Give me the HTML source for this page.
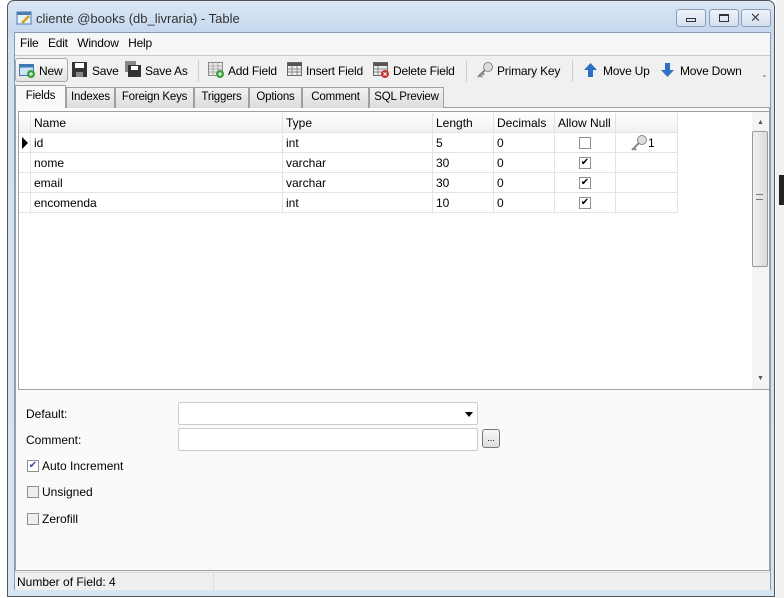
<!DOCTYPE html>
<html><head><style>
*{box-sizing:border-box;margin:0;padding:0}
body{width:784px;height:598px;background:#fff;position:relative;overflow:hidden;font-family:"Liberation Sans",sans-serif;font-size:12px;color:#000}
.a{position:absolute;white-space:nowrap}
.win{left:7px;top:0;width:768px;height:597px;border:1px solid #555;border-radius:7px 7px 0 0;background:linear-gradient(#dbe7f4,#c6d8ee 30px,#cfe0f3 40px,#d6e5f5)}
.client{left:14px;top:32px;width:757px;height:558px;background:#f0f0f0;border:1px solid #8a9bb0}
.tb{font-size:12px;color:#000;letter-spacing:-0.2px}
.btn{top:9px;width:30px;height:18px;border:1px solid #8c9cb2;border-radius:3px;background:linear-gradient(#eef3fa,#d4e0ef)}
.tab{top:87px;height:21px;border:1px solid #a0a0a0;border-bottom:none;background:linear-gradient(#f2f2f2,#dcdcdc);font-size:11.5px;padding:3px 0 0;text-align:center;overflow:hidden;letter-spacing:-0.2px}
.cell{position:absolute;height:20px;border-right:1px solid #e3e3e3;border-bottom:1px solid #e3e3e3;padding:3px 3px 0;font-size:12px;white-space:nowrap}
.cb{position:absolute;width:12px;height:12px;border:1px solid #8f8f8f;background:#fff;font-size:10px;line-height:10px;text-align:center}
</style></head><body>
<div class="a" style="left:776px;top:0;width:8px;height:598px;background:#f0f0f0"></div>
<div class="a" style="left:779px;top:175px;width:5px;height:30px;background:#222"></div>
<div class="a win"></div>
<svg class="a" style="left:16px;top:10px" width="16" height="16"><rect x="1" y="2" width="14" height="12" fill="#e8f0f8" stroke="#4b7bb5"/><rect x="1" y="2" width="14" height="3" fill="#4b7bb5"/><path d="M6 13 L13 6" stroke="#d8a020" stroke-width="2.5"/></svg>
<div class="a" style="left:36px;top:11px;font-size:13px;color:#333">cliente @books (db_livraria) - Table</div>
<div class="a btn" style="left:676px"><div class="a" style="left:9px;top:8px;width:10px;height:4px;border:1px solid #333"></div></div>
<div class="a btn" style="left:709px"><div class="a" style="left:9px;top:4px;width:10px;height:8px;border:1px solid #333;border-top-width:2px"></div></div>
<div class="a btn" style="left:741px"><div class="a" style="left:8px;top:0px;font-size:13px;color:#444">✕</div></div>
<div class="a client"></div>
<div class="a" style="left:15px;top:33px;width:755px;height:22px;background:#f5f6f7"></div>
<div class="a tb" style="left:20px;top:36px">File&nbsp;&nbsp; Edit&nbsp;&nbsp; Window&nbsp;&nbsp; Help</div>
<div class="a" style="left:15px;top:55px;width:755px;height:1px;background:#c8c8c8"></div>
<div class="a" style="left:15px;top:58px;width:53px;height:24px;border:1px solid #a8a8a8;border-radius:3px;background:linear-gradient(#fafafa,#e4e4e4)"></div>
<svg class="a" style="left:19px;top:62px" width="16" height="16"><rect x="0.5" y="2.5" width="14" height="11" fill="#cfe1f2" stroke="#3b78b5"/><rect x="0.5" y="2.5" width="14" height="3" fill="#3b78b5"/><circle cx="12" cy="12" r="4" fill="#3ca23c"/><path d="M10 12h4M12 10v4" stroke="#fff"/></svg>
<div class="a tb" style="left:39px;top:64px">New</div>
<svg class="a" style="left:72px;top:62px" width="15" height="15"><rect x="0" y="0" width="15" height="15" fill="#333"/><rect x="3" y="1" width="9" height="5" fill="#fff"/><rect x="4" y="10" width="7" height="5" fill="#888"/></svg>
<div class="a tb" style="left:92px;top:64px">Save</div>
<svg class="a" style="left:125px;top:61px" width="16" height="16"><rect x="0" y="0" width="11" height="11" fill="#888"/><rect x="3" y="4" width="13" height="12" fill="#333"/><rect x="6" y="5" width="7" height="4" fill="#fff"/></svg>
<div class="a tb" style="left:145px;top:64px">Save As</div>
<div class="a" style="left:198px;top:60px;width:1px;height:22px;background:#ccc"></div>
<svg class="a" style="left:208px;top:62px" width="17" height="16"><rect x="0.5" y="0.5" width="14" height="13" fill="#eee" stroke="#888"/><path d="M1 4h14M1 7h14M1 10h14M5 1v13M10 1v13" stroke="#aaa"/><circle cx="12" cy="12" r="4" fill="#3ca23c"/><path d="M10 12h4M12 10v4" stroke="#fff"/></svg>
<div class="a tb" style="left:228px;top:64px">Add Field</div>
<svg class="a" style="left:287px;top:62px" width="16" height="15"><rect x="0.5" y="0.5" width="14" height="13" fill="#eee" stroke="#666"/><rect x="1" y="1" width="14" height="3" fill="#555"/><path d="M1 7h14M1 10h14M5 4v10M10 4v10" stroke="#888"/></svg>
<div class="a tb" style="left:306px;top:64px">Insert Field</div>
<svg class="a" style="left:373px;top:62px" width="17" height="16"><rect x="0.5" y="0.5" width="14" height="13" fill="#eee" stroke="#666"/><rect x="1" y="1" width="14" height="3" fill="#555"/><path d="M1 7h14M1 10h14M5 4v10" stroke="#888"/><circle cx="12" cy="12" r="4" fill="#c33"/><path d="M10.5 10.5l3 3M13.5 10.5l-3 3" stroke="#fff"/></svg>
<div class="a tb" style="left:393px;top:64px">Delete Field</div>
<div class="a" style="left:466px;top:60px;width:1px;height:22px;background:#ccc"></div>
<svg class="a" style="left:476px;top:61px" width="18" height="18"><circle cx="12" cy="6" r="4.5" fill="#ddd" stroke="#888"/><path d="M9 9 L2 16 M4 14l2 2M6 12l2 2" stroke="#888" stroke-width="2"/></svg>
<div class="a tb" style="left:497px;top:64px">Primary Key</div>
<div class="a" style="left:572px;top:60px;width:1px;height:22px;background:#ccc"></div>
<svg class="a" style="left:584px;top:63px" width="13" height="14"><path d="M6.5 0L13 7H9v7H4V7H0z" fill="#2e6fc4"/></svg>
<div class="a tb" style="left:603px;top:64px">Move Up</div>
<svg class="a" style="left:661px;top:63px" width="13" height="14"><path d="M6.5 14L13 7H9V0H4v7H0z" fill="#2e6fc4"/></svg>
<div class="a tb" style="left:680px;top:64px">Move Down</div>
<div class="a" style="left:761px;top:70px;font-size:8px;color:#666">⌄</div>
<div class="a" style="left:15px;top:107px;width:755px;height:464px;border:1px solid #a0a0a0;background:#fafafa"></div>
<div class="a tab" style="left:66px;width:49px">Indexes</div>
<div class="a tab" style="left:115px;width:79px">Foreign Keys</div>
<div class="a tab" style="left:194px;width:55px">Triggers</div>
<div class="a tab" style="left:249px;width:53px">Options</div>
<div class="a tab" style="left:302px;width:67px">Comment</div>
<div class="a tab" style="left:369px;width:75px">SQL Preview</div>
<div class="a tab" style="left:15px;top:85px;width:51px;height:23px;background:#fafafa;padding-top:4px">Fields</div>
<div class="a" style="left:18px;top:111px;width:752px;height:279px;border:1px solid #a0a0a0;background:#fff"></div>
<div class="a" style="left:19px;top:112px;width:659px;height:21px;background:linear-gradient(#fff,#f0f0f0)"></div>
<div class="cell" style="left:19px;top:113px;width:12px"></div>
<div class="cell" style="left:31px;top:113px;width:252px">Name</div>
<div class="cell" style="left:283px;top:113px;width:150px">Type</div>
<div class="cell" style="left:433px;top:113px;width:61px">Length</div>
<div class="cell" style="left:494px;top:113px;width:61px">Decimals</div>
<div class="cell" style="left:555px;top:113px;width:61px">Allow Null</div>
<div class="cell" style="left:616px;top:113px;width:62px"></div>

<div class="cell" style="left:19px;top:133px;width:12px"><div class="a" style="left:3px;top:4px;width:0;height:0;border-left:6px solid #000;border-top:6px solid transparent;border-bottom:6px solid transparent"></div></div>
<div class="cell" style="left:31px;top:133px;width:252px">id</div><div class="cell" style="left:283px;top:133px;width:150px">int</div><div class="cell" style="left:433px;top:133px;width:61px">5</div><div class="cell" style="left:494px;top:133px;width:61px">0</div><div class="cell" style="left:555px;top:133px;width:61px"><div class="cb" style="left:24px;top:4px"></div></div><div class="cell" style="left:616px;top:133px;width:62px"><svg class="a" style="left:14px;top:1px" width="18" height="17"><circle cx="12" cy="6" r="4.5" fill="#ddd" stroke="#888"/><path d="M9 9 L2 16 M4 14l2 2" stroke="#888" stroke-width="2"/></svg><span class="a" style="left:32px;top:3px">1</span></div>
<div class="cell" style="left:19px;top:153px;width:12px"></div>
<div class="cell" style="left:31px;top:153px;width:252px">nome</div><div class="cell" style="left:283px;top:153px;width:150px">varchar</div><div class="cell" style="left:433px;top:153px;width:61px">30</div><div class="cell" style="left:494px;top:153px;width:61px">0</div><div class="cell" style="left:555px;top:153px;width:61px"><div class="cb" style="left:24px;top:4px">✔</div></div><div class="cell" style="left:616px;top:153px;width:62px"></div>
<div class="cell" style="left:19px;top:173px;width:12px"></div>
<div class="cell" style="left:31px;top:173px;width:252px">email</div><div class="cell" style="left:283px;top:173px;width:150px">varchar</div><div class="cell" style="left:433px;top:173px;width:61px">30</div><div class="cell" style="left:494px;top:173px;width:61px">0</div><div class="cell" style="left:555px;top:173px;width:61px"><div class="cb" style="left:24px;top:4px">✔</div></div><div class="cell" style="left:616px;top:173px;width:62px"></div>
<div class="cell" style="left:19px;top:193px;width:12px"></div>
<div class="cell" style="left:31px;top:193px;width:252px">encomenda</div><div class="cell" style="left:283px;top:193px;width:150px">int</div><div class="cell" style="left:433px;top:193px;width:61px">10</div><div class="cell" style="left:494px;top:193px;width:61px">0</div><div class="cell" style="left:555px;top:193px;width:61px"><div class="cb" style="left:24px;top:4px">✔</div></div><div class="cell" style="left:616px;top:193px;width:62px"></div>

<div class="a" style="left:752px;top:112px;width:17px;height:277px;background:#f4f4f4"></div>
<div class="a" style="left:757px;top:119px;font-size:7px;color:#555">▲</div>
<div class="a" style="left:752px;top:131px;width:16px;height:136px;border:1px solid #999;border-radius:2px;background:linear-gradient(90deg,#f0f0f0,#dcdcdc)"></div>
<div class="a" style="left:756px;top:194px;width:7px;height:6px;border-top:1px solid #777;border-bottom:1px solid #777"></div>
<div class="a" style="left:757px;top:375px;font-size:7px;color:#555">▼</div>

<div class="a" style="left:26px;top:407px">Default:</div>
<div class="a" style="left:178px;top:402px;width:300px;height:23px;border:1px solid #ccc;border-radius:2px;background:#fff"><div class="a" style="left:286px;top:9px;border-top:5px solid #000;border-left:4px solid transparent;border-right:4px solid transparent"></div></div>
<div class="a" style="left:26px;top:433px">Comment:</div>
<div class="a" style="left:178px;top:428px;width:300px;height:23px;border:1px solid #ccc;border-radius:2px;background:#fff"></div>
<div class="a" style="left:482px;top:429px;width:18px;height:19px;border:1px solid #777;border-radius:3px;background:linear-gradient(#f8f8f8,#ddd);font-size:9px;text-align:center;line-height:16px">...</div>
<div class="cb" style="left:27px;top:460px;color:#3050a0">✔</div><div class="a" style="left:42px;top:459px">Auto Increment</div>
<div class="cb" style="left:27px;top:486px;background:#eee"></div><div class="a" style="left:42px;top:485px">Unsigned</div>
<div class="cb" style="left:27px;top:513px;background:#eee"></div><div class="a" style="left:42px;top:512px">Zerofill</div>

<div class="a" style="left:15px;top:572px;width:755px;height:18px;background:#f0eeee;border-top:1px solid #ddd"></div>
<div class="a" style="left:213px;top:572px;width:1px;height:18px;background:#ddd"></div>
<div class="a" style="left:17px;top:575px">Number of Field: 4</div>
</body></html>
